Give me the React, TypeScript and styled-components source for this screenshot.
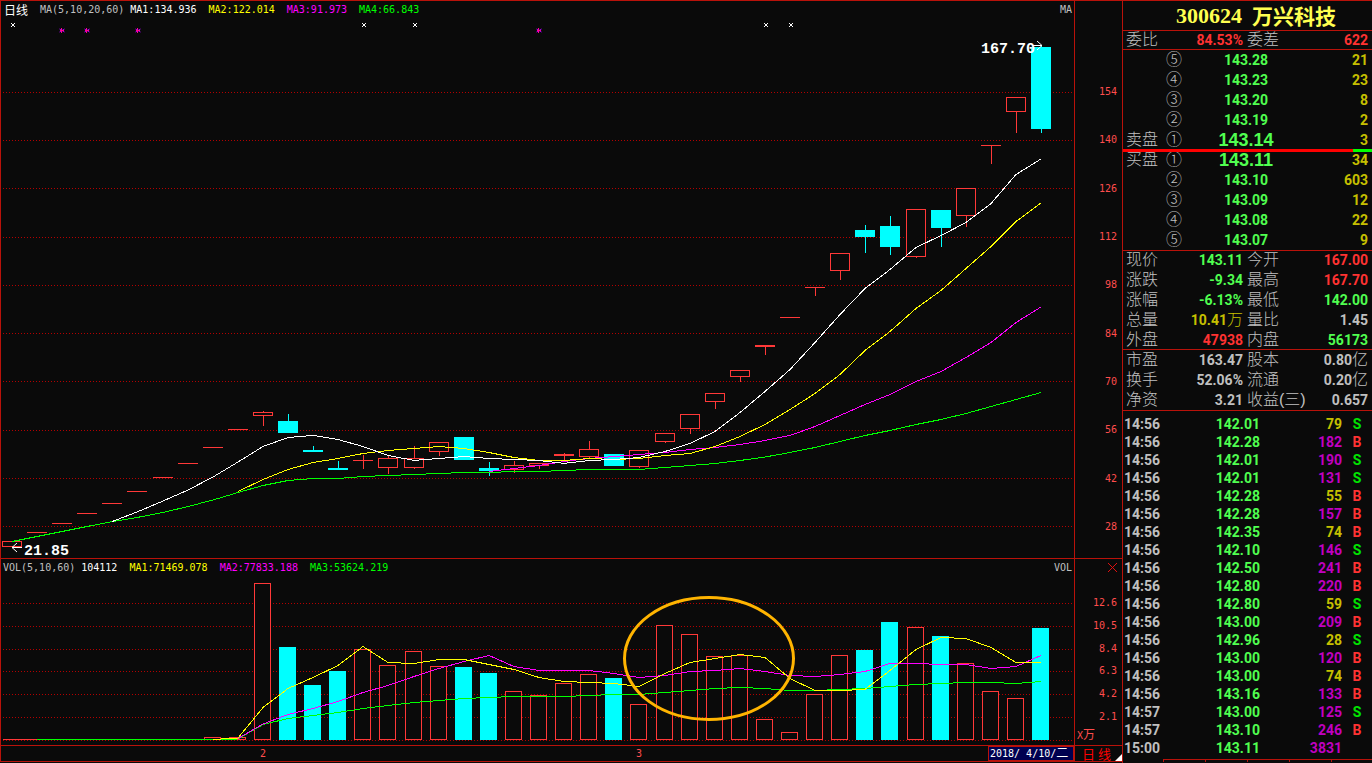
import React from 'react';
import styled, { createGlobalStyle } from 'styled-components';

const color = {
  bg: '#0a0a0a',
  line: '#b9120a',
  dot: '#b40000',
  axis: '#ff4d4d',
  up: '#ff3838',
  down: '#00ffff',
  grey: '#c0c0c0',
  white: '#ffffff',
  yellow: '#ffff00',
  magenta: '#ff00ff',
  lime: '#00ff00',
  red: '#ff3232',
  green: '#50ff50',
  gold: '#c6c000',
  purple: '#c000c0',
  sell: '#00e600',
};

const cjk = '"Noto Sans CJK SC"';
const cjkLabel = `'Liberation Sans', ${cjk}, sans-serif`;

const GlobalStyle = createGlobalStyle`
  *, *::before, *::after { box-sizing: border-box; }
  body { margin: 0; background: ${color.bg}; }
  button { background: none; border: 0; padding: 0; margin: 0; font: inherit; color: inherit; cursor: pointer; }
  table { border-collapse: collapse; border-spacing: 0; table-layout: fixed; width: 100%; }
  td, th { padding: 0; font-weight: inherit; text-align: left; }
`;

/* ---------- shell ---------- */

const Terminal = styled.div`
  display: flex;
  align-items: stretch;
  min-height: 100vh;
  background: ${color.bg};
  color: ${color.grey};
  border-top: 1px solid ${color.line};
`;

const ChartArea = styled.main`
  flex: 1;
  min-width: 0;
  align-self: flex-start;
  border-left: 1px solid ${color.line};
  font: 10px/18px 'DejaVu Sans Mono', ${cjk}, monospace;
`;

const ChartRow = styled.section`
  display: grid;
  grid-template-columns: minmax(0, 1fr) 48px;
  border-bottom: 1px solid ${color.line};
`;

const Pane = styled.div`
  min-width: 0;
`;

const Legend = styled.header`
  display: flex;
  align-items: center;
  height: 18px;
  gap: 12px;
  padding: 0 2px;
  white-space: nowrap;
`;

const Period = styled.h2`
  margin: 0 0 0 1px;
  font: 400 12px/16px ${cjk}, sans-serif;
  color: ${color.white};
`;

const LegendGroup = styled.div`
  display: flex;
  gap: 6px;
`;

const LegendItem = styled.span<{ $c: string }>`
  color: ${(p) => p.$c};
`;

const LegendEnd = styled.span`
  margin-left: auto;
`;

const Plot = styled.svg`
  display: block;
  width: 100%;
  height: auto;
  overflow: visible;
`;

const Axis = styled.aside`
  display: flex;
  flex-direction: column;
  border-left: 1px solid ${color.line};
  color: ${color.axis};
  padding-right: 5px;
`;

const Scale = styled.ol<{ $top: number; $bottom: number; $row: number }>`
  flex: 1;
  display: flex;
  flex-direction: column;
  justify-content: space-between;
  margin: 0;
  padding: ${(p) => p.$top}px 0 ${(p) => p.$bottom}px;
  list-style: none;
  text-align: right;
  line-height: ${(p) => p.$row}px;
`;

const CloseButton = styled.button`
  align-self: flex-end;
  display: flex;
  height: 17px;
  align-items: center;
`;

const Unit = styled.div`
  padding-left: 2px;
  line-height: 18px;
  height: 18px;
`;

const Cjk12 = styled.span`
  font-size: 12px;
  line-height: 1;
`;

const DateAxis = styled.div`
  display: grid;
  grid-template-columns: 259fr 376fr 352fr 86px;
  height: 15px;
  line-height: 15px;
  color: ${color.axis};
`;

const DateBox = styled.time`
  border: 1px solid ${color.line};
  background: #000050;
  color: ${color.white};
  line-height: 13px;
  padding-left: 1px;
  white-space: pre;
`;

const PeriodButton = styled.button`
  display: flex;
  align-items: center;
  justify-content: space-between;
  height: 15px;
  padding-left: 7px;
  border-left: 1px solid ${color.line};
  font: 13px/15px ${cjk}, sans-serif;
  color: #ff0000;
  white-space: pre;
`;

const Corner = styled.svg`
  align-self: flex-end;
`;

/* ---------- quote panel ---------- */

const QuotePanel = styled.aside`
  flex: 0 0 250px;
  min-width: 0;
  border-left: 1px solid ${color.line};
  font: 700 14px/20px Roboto, ${cjk}, sans-serif;
`;

const Title = styled.h1`
  display: flex;
  justify-content: center;
  gap: 10px;
  margin: 0;
  height: 30px;
  border-bottom: 1px solid ${color.line};
  padding-left: 17px;
  font: 700 21px/29px ${cjk}, sans-serif;
  color: #ffff50;
`;

const Code = styled.span`
  font: 700 22px/30px 'Liberation Serif', serif;
`;

const Label = styled.span`
  display: block;
  font: 300 16px/18px ${cjkLabel};
  color: ${color.grey};
`;

const Facts = styled.div<{ $edge?: boolean; $bottom?: boolean }>`
  box-shadow: ${(p) => (p.$edge ? `inset 0 1px ${color.line}, inset 0 -1px ${color.line}` : 'none')};
  border-bottom: ${(p) => (p.$bottom ? `1px solid ${color.line}` : '0')};
`;

const FactRow = styled.div<{ $h?: number }>`
  display: grid;
  grid-template-columns: 117px 1fr;
  column-gap: 4px;
  height: ${(p) => p.$h ?? 20}px;
  padding: 0 4px 0 3px;
  align-items: center;
`;

const Fact = styled.div`
  display: flex;
  justify-content: space-between;
  align-items: center;
  height: 18px;
  white-space: nowrap;
`;

const Value = styled.span<{ $c: string }>`
  display: flex;
  align-items: center;
  line-height: 18px;
  color: ${(p) => p.$c};
`;

const ThinCjk = styled.span`
  font: 300 16px/18px ${cjkLabel};
`;

const BookTable = styled.table`
  td, th { height: 20px; line-height: 18px; vertical-align: middle; }
`;

const SideCell = styled.th`
  && { padding-left: 3px; }
`;

const BookPrice = styled.td<{ $best: boolean }>`
  && { text-align: center; }
  color: ${color.green};
  font: ${(p) => (p.$best ? "700 18px/18px 'Liberation Sans', sans-serif" : 'inherit')};
`;

const Qty = styled.td`
  && { text-align: right; padding-right: 4px; }
  color: ${color.gold};
`;

const Balance = styled.div`
  display: flex;
  position: relative;
  height: 3px;
  margin: -1px 0 -2px;
  background: #ff0000;
`;

const BalanceRest = styled.span`
  width: 19px;
  margin-left: auto;
  background: #00ff00;
`;

const TickTable = styled.table`
  margin-top: 4px;
  td { height: 18px; line-height: 18px; }
`;

const TickCell = styled.td<{ $c: string; $right?: boolean }>`
  && {
    text-align: ${(p) => (p.$right ? 'right' : 'left')};
    padding-left: ${(p) => (p.$right ? 0 : 1)}px;
  }
  color: ${(p) => p.$c};
`;

const SideFlag = styled.td<{ $c: string }>`
  && { text-align: center; }
  color: ${(p) => p.$c};
`;

const TabStrip = styled.div`
  display: grid;
  grid-template-columns: repeat(4, 42px) 1fr;
  margin: 2px 0 0 40px;
  border-top: 1px solid ${color.line};
`;

const TabStub = styled.span`
  height: 2px;
  border-left: 1px solid ${color.line};
`;

/* ---------- data ---------- */

type Kind = 'u' | 'd';
// body top, body bottom, wick top, wick bottom, direction
type Candle = [number, number, number, number, Kind];

const candles: Candle[] = [
  [541, 547, 541, 547, 'u'], [532, 533, 532, 533, 'u'], [523, 524, 523, 524, 'u'],
  [513, 514, 513, 514, 'u'], [503, 504, 503, 504, 'u'], [491, 492, 491, 492, 'u'],
  [477, 478, 477, 478, 'u'], [463, 464, 463, 464, 'u'], [447, 448, 447, 448, 'u'],
  [429, 430, 429, 430, 'u'], [412, 416, 411, 426, 'u'], [421, 433, 414, 433, 'd'],
  [450, 452, 446, 452, 'd'], [468, 470, 461, 470, 'd'], [460, 461, 455, 469, 'u'],
  [458, 468, 456, 474, 'u'], [458, 468, 446, 469, 'u'], [442, 452, 442, 456, 'u'],
  [437, 460, 437, 460, 'd'], [468, 471, 462, 476, 'd'], [465, 470, 461, 473, 'u'],
  [463, 466, 463, 469, 'u'], [454, 456, 453, 460, 'u'], [449, 457, 441, 458, 'u'],
  [454, 466, 454, 466, 'd'], [450, 467, 450, 468, 'u'], [433, 442, 433, 443, 'u'],
  [414, 429, 414, 434, 'u'], [393, 402, 393, 409, 'u'], [370, 377, 370, 382, 'u'],
  [345, 347, 345, 355, 'u'], [317, 318, 317, 318, 'u'], [287, 288, 287, 296, 'u'],
  [253, 271, 253, 280, 'u'], [230, 237, 225, 253, 'd'], [226, 247, 216, 255, 'd'],
  [209, 257, 209, 258, 'u'], [210, 228, 210, 247, 'd'], [188, 216, 188, 227, 'u'],
  [145, 146, 145, 164, 'u'], [97, 112, 97, 133, 'u'], [47, 129, 46, 133, 'd'],
];

const volumeTops = [
  739, 739, 739, 739, 739, 739, 739, 739, 737, 737, 583, 647, 685, 671, 649, 665, 651, 666,
  667, 673, 691, 695, 683, 674, 678, 704, 625, 634, 656, 655, 719, 732, 694, 655, 650, 622,
  627, 636, 663, 691, 698, 628,
];

const volumeDown = new Set([11, 12, 13, 18, 19, 24, 34, 35, 37, 41]);

interface Series { c: string; from: number; y: number[] }

const priceLines: Series[] = [
  { c: color.white, from: 4, y: [521.6, 512, 501, 490, 477, 462, 446.5, 437.5, 435.4, 439.5, 446.5, 455.5, 460.4, 458.5, 456.5, 458.5, 459.5, 460.5, 463.4, 460.5, 459.5, 457.5, 451.5, 443.5, 431.5, 412.5, 391.5, 369.5, 342.5, 314.5, 288.5, 269.5, 247.5, 235.5, 222.5, 203.5, 174.5, 159] },
  { c: color.yellow, from: 9, y: [491.5, 479.5, 469.5, 462.5, 458.5, 453.5, 450.5, 448.5, 446.5, 448.5, 452.5, 457.5, 460.5, 460.5, 458.5, 459.5, 458.5, 455.5, 453.5, 446.5, 436.5, 424.5, 409.5, 393.5, 374.5, 350.5, 331.5, 308.5, 290.5, 268.5, 246.5, 221.5, 203] },
  { c: color.magenta, from: 19, y: [471.5, 468.5, 465.5, 461.5, 458.5, 456.5, 454.5, 452.5, 449.5, 447.5, 444.5, 440.5, 435.5, 426.5, 415.5, 404.5, 394.5, 381.5, 371.5, 357.5, 342.5, 322.5, 307] },
  { c: color.lime, from: 0, y: [541.5, 536.5, 531.5, 526.5, 521.6, 517.5, 512.5, 506.5, 500, 492.5, 485.5, 480.5, 478.5, 478.5, 476.5, 475.5, 474.5, 473.5, 472.5, 472.5, 471.5, 471.5, 470.5, 469.5, 469.5, 469.5, 467.5, 465.5, 463.5, 460.5, 457, 452.5, 447.5, 441.5, 435.5, 430.5, 424.5, 419.5, 413.5, 406.5, 399.5, 392.5] },
];

const volumeLines: Series[] = [
  { c: color.yellow, from: 8, y: [739.5, 738, 707.5, 688.5, 677.5, 665.5, 646.5, 662.5, 663.5, 659.5, 659.5, 664.5, 669.5, 677.5, 681.5, 682.5, 683.5, 686.5, 673.5, 662.5, 658.5, 654.5, 657.5, 678.5, 690.5, 690.5, 689.5, 670.5, 649.5, 637.5, 638.5, 647.5, 662.5, 662.5] },
  { c: color.magenta, from: 9, y: [738.5, 724, 714.5, 708.5, 701.5, 692.5, 685.5, 676.5, 668.5, 661.5, 655.5, 666.5, 670.5, 670.5, 670.5, 673.5, 677.5, 675.5, 671.5, 670.5, 668.5, 671.5, 675.5, 676.5, 674.5, 671.5, 663.5, 663.5, 664.5, 664.5, 668.5, 666.5, 655.5] },
  { c: color.lime, from: 1, y: [739.5, 739.5, 739.5, 739.5, 739.5, 739.5, 739.5, 739.5, 739, 724.5, 718.5, 715.5, 712.5, 708.5, 705.5, 702.5, 700.5, 698.5, 697.5, 696.5, 696.5, 696.5, 695.5, 694.5, 694.5, 692.5, 690.5, 688.5, 687.5, 688.5, 690.5, 690.5, 689.5, 688.5, 686.5, 684.5, 683.5, 682.5, 682.5, 683.5, 681.5] },
];

const priceGrid = [92, 140, 188, 237, 285, 333, 381, 430, 478, 526];
const volumeGrid = [603, 626, 649, 671, 694, 717, 740];
const priceScale = ['154', '140', '126', '112', '98', '84', '70', '56', '42', '28'];
const volumeScale = ['12.6', '10.5', '8.4', '6.3', '4.2', '2.1'];

const asks: [string, string, string][] = [
  ['⑤', '143.28', '21'], ['④', '143.23', '23'], ['③', '143.20', '8'], ['②', '143.19', '2'], ['①', '143.14', '3'],
];
const bids: [string, string, string][] = [
  ['①', '143.11', '34'], ['②', '143.10', '603'], ['③', '143.09', '12'], ['④', '143.08', '22'], ['⑤', '143.07', '9'],
];

interface FactData { label: string; value: string; unit?: string; c: string }

const quoteFacts: [FactData, FactData][] = [
  [{ label: '现价', value: '143.11', c: color.green }, { label: '今开', value: '167.00', c: color.red }],
  [{ label: '涨跌', value: '-9.34', c: color.green }, { label: '最高', value: '167.70', c: color.red }],
  [{ label: '涨幅', value: '-6.13%', c: color.green }, { label: '最低', value: '142.00', c: color.green }],
  [{ label: '总量', value: '10.41', unit: '万', c: color.gold }, { label: '量比', value: '1.45', c: color.grey }],
  [{ label: '外盘', value: '47938', c: color.red }, { label: '内盘', value: '56173', c: color.green }],
];

const companyFacts: [FactData, FactData][] = [
  [{ label: '市盈', value: '163.47', c: color.grey }, { label: '股本', value: '0.80', unit: '亿', c: color.grey }],
  [{ label: '换手', value: '52.06%', c: color.grey }, { label: '流通', value: '0.20', unit: '亿', c: color.grey }],
  [{ label: '净资', value: '3.21', c: color.grey }, { label: '收益(三)', value: '0.657', c: color.grey }],
];

const ticks: [string, string, number, string][] = [
  ['14:56', '142.01', 79, 'S'], ['14:56', '142.28', 182, 'B'], ['14:56', '142.01', 190, 'S'],
  ['14:56', '142.01', 131, 'S'], ['14:56', '142.28', 55, 'B'], ['14:56', '142.28', 157, 'B'],
  ['14:56', '142.35', 74, 'B'], ['14:56', '142.10', 146, 'S'], ['14:56', '142.50', 241, 'B'],
  ['14:56', '142.80', 220, 'B'], ['14:56', '142.80', 59, 'S'], ['14:56', '143.00', 209, 'B'],
  ['14:56', '142.96', 28, 'S'], ['14:56', '143.00', 120, 'B'], ['14:56', '143.00', 74, 'B'],
  ['14:56', '143.16', 133, 'B'], ['14:57', '143.00', 125, 'S'], ['14:57', '143.10', 246, 'B'],
  ['15:00', '143.11', 3831, ''],
];

/* ---------- drawing ---------- */

const slot = (i: number) => Math.round(11.95 + 25.1 * i);

const Grid = ({ rows }: { rows: number[] }) => (
  <g stroke={color.dot} strokeDasharray="1 2">
    {rows.map((y) => <line key={y} x1={3} x2={1073} y1={y + 0.5} y2={y + 0.5} />)}
  </g>
);

const Lines = ({ series }: { series: Series[] }) => (
  <g fill="none">
    {[...series].reverse().map((s) => (
      <polyline key={s.c} stroke={s.c} points={s.y.map((y, k) => `${slot(s.from + k)},${y}`).join(' ')} />
    ))}
  </g>
);

const CandleMark = ({ data, i }: { data: Candle; i: number }) => {
  const [top, bottom, high, low, kind] = data;
  const x = slot(i);
  const c = kind === 'u' ? color.up : color.down;
  const solid = kind === 'd' || bottom - top <= 2;
  return (
    <g>
      {high < top && <rect x={x} y={high} width={1} height={top - high} fill={c} />}
      {low > bottom && <rect x={x} y={bottom} width={1} height={low - bottom} fill={c} />}
      {solid
        ? <rect x={x - 10} y={top} width={20} height={bottom - top} fill={c} />
        : <rect x={x - 9.5} y={top + 0.5} width={19} height={bottom - top - 1} fill={color.bg} stroke={c} />}
    </g>
  );
};

const PricePlot = () => (
  <Plot viewBox="1 19 1073 539" shapeRendering="crispEdges" role="img" aria-label="日线">
    <Grid rows={priceGrid} />
    {candles.map((d, i) => <CandleMark key={i} data={d} i={i} />)}
    <Lines series={priceLines} />
    <g stroke={color.white}>
      {[13, 364, 415, 766, 791].map((x) => (
        <path key={x} shapeRendering="auto" d={`M${x - 2} 23l4 4m0-4l-4 4`} />
      ))}
    </g>
    {[62, 87, 138, 539].map((x) => (
      <g key={x} fill="none" shapeRendering="auto">
        <path stroke="#b000ff" d={`M${x - 2.5} 29l5 3m0-3l-5 3`} />
        <path stroke="#ff0090" d={`M${x - 2} 30.5h4M${x - 0.5} 28v5`} />
      </g>
    ))}
    <g fill="none" stroke={color.white} shapeRendering="auto">
      <path d="M12 547.5h10M17 543l-5 4.5l5 4.5" />
      <path d="M1032 45.5h10M1037 41l5 4.5l-5 4.5" />
    </g>
    <g fill={color.white} fontFamily="'Liberation Mono', monospace" fontWeight={700} fontSize={15}>
      <text x={24} y={555}>21.85</text>
      <text x={981} y={53}>167.70</text>
    </g>
  </Plot>
);

const VolumePlot = () => (
  <Plot viewBox="1 577 1073 168" shapeRendering="crispEdges" role="img" aria-label="VOL">
    <Grid rows={volumeGrid} />
    {volumeTops.map((y, i) => {
      const x = slot(i) - 9;
      return volumeDown.has(i)
        ? <rect key={i} x={x} y={y} width={17} height={740 - y} fill={color.down} />
        : <rect key={i} x={x + 0.5} y={y + 0.5} width={16} height={739 - y} fill={color.bg} stroke={color.up} />;
    })}
    <line x1={3} x2={205} y1={739.5} y2={739.5} stroke={color.up} />
    <Lines series={volumeLines} />
    <ellipse cx={709} cy={658.5} rx={84.5} ry={61} fill="none" stroke="#ffb400" strokeWidth={3} shapeRendering="auto" />
  </Plot>
);

/* ---------- parts ---------- */

const FactView = ({ f }: { f: FactData }) => (
  <Fact>
    <Label>{f.label}</Label>
    <Value $c={f.c}>{f.value}{f.unit && <ThinCjk>{f.unit}</ThinCjk>}</Value>
  </Fact>
);

const FactRows = ({ rows }: { rows: [FactData, FactData][] }) => (
  <>
    {rows.map(([a, b]) => (
      <FactRow key={a.label}><FactView f={a} /><FactView f={b} /></FactRow>
    ))}
  </>
);

const BookCols = () => (
  <colgroup><col width="43" /><col width="40" /><col width="80" /><col /></colgroup>
);

const Book = ({ rows, side, sideRow }: { rows: [string, string, string][]; side: string; sideRow: number }) => (
  <BookTable>
    <BookCols />
    <tbody>
      {rows.map(([n, price, qty], i) => (
        <tr key={n}>
          <SideCell scope="row">{i === sideRow && <Label>{side}</Label>}</SideCell>
          <td><Label>{n}</Label></td>
          <BookPrice $best={i === sideRow}>{price}</BookPrice>
          <Qty>{qty}</Qty>
        </tr>
      ))}
    </tbody>
  </BookTable>
);

export default function App() {
  return (
    <>
      <GlobalStyle />
      <Terminal>
        <ChartArea>
          <ChartRow>
            <Pane>
              <Legend>
                <Period>日线</Period>
                <LegendGroup>
                  <span>MA(5,10,20,60)</span>
                  <LegendItem $c={color.white}>MA1:134.936</LegendItem>
                </LegendGroup>
                <LegendItem $c={color.yellow}>MA2:122.014</LegendItem>
                <LegendItem $c={color.magenta}>MA3:91.973</LegendItem>
                <LegendItem $c={color.lime}>MA4:66.843</LegendItem>
                <LegendEnd>MA</LegendEnd>
              </Legend>
              <PricePlot />
            </Pane>
            <Axis>
              <Scale $top={81} $bottom={21} $row={20}>
                {priceScale.map((p) => <li key={p}>{p}</li>)}
              </Scale>
            </Axis>
          </ChartRow>
          <ChartRow>
            <Pane>
              <Legend>
                <LegendGroup>
                  <span>VOL(5,10,60)</span>
                  <LegendItem $c={color.white}>104112</LegendItem>
                </LegendGroup>
                <LegendItem $c={color.yellow}>MA1:71469.078</LegendItem>
                <LegendItem $c={color.magenta}>MA2:77833.188</LegendItem>
                <LegendItem $c={color.lime}>MA3:53624.219</LegendItem>
                <LegendEnd>VOL</LegendEnd>
              </Legend>
              <VolumePlot />
            </Pane>
            <Axis>
              <CloseButton aria-label="关闭">
                <svg width="9" height="9" viewBox="0 0 9 9" stroke="#e01010"><path d="M0 0l9 9M9 0l-9 9" /></svg>
              </CloseButton>
              <Scale $top={19} $bottom={2} $row={16}>
                {volumeScale.map((p) => <li key={p}>{p}</li>)}
              </Scale>
              <Unit>X<Cjk12>万</Cjk12></Unit>
            </Axis>
          </ChartRow>
          <ChartRow>
            <DateAxis>
              <span />
              <span>2</span>
              <span>3</span>
              <DateBox dateTime="2018-04-10">2018/ 4/10/<Cjk12>二</Cjk12></DateBox>
            </DateAxis>
            <PeriodButton>
              日 线
              <Corner width="7" height="7" viewBox="0 0 7 7"><path d="M7 0v7H0z" fill="#fff" /></Corner>
            </PeriodButton>
          </ChartRow>
        </ChartArea>

        <QuotePanel>
          <Title><Code>300624</Code><span>万兴科技</span></Title>
          <Facts $bottom>
            <FactRow $h={18}>
              <FactView f={{ label: '委比', value: '84.53%', c: color.red }} />
              <FactView f={{ label: '委差', value: '622', c: color.red }} />
            </FactRow>
          </Facts>
          <Book rows={asks} side="卖盘" sideRow={4} />
          <Balance><BalanceRest /></Balance>
          <Book rows={bids} side="买盘" sideRow={0} />
          <Facts $edge><FactRows rows={quoteFacts} /></Facts>
          <Facts $bottom><FactRows rows={companyFacts} /></Facts>
          <TickTable>
            <colgroup><col width="57" /><col width="80" /><col width="82" /><col /></colgroup>
            <tbody>
              {ticks.map(([time, price, vol, flag], i) => (
                <tr key={i}>
                  <TickCell $c={color.grey}>{time}</TickCell>
                  <TickCell $c={color.green} $right>{price}</TickCell>
                  <TickCell $c={vol >= 100 ? color.purple : color.gold} $right>{vol}</TickCell>
                  <SideFlag $c={flag === 'S' ? color.sell : color.red}>{flag}</SideFlag>
                </tr>
              ))}
            </tbody>
          </TickTable>
          <TabStrip>
            {[0, 1, 2, 3, 4].map((n) => <TabStub key={n} />)}
          </TabStrip>
        </QuotePanel>
      </Terminal>
    </>
  );
}
